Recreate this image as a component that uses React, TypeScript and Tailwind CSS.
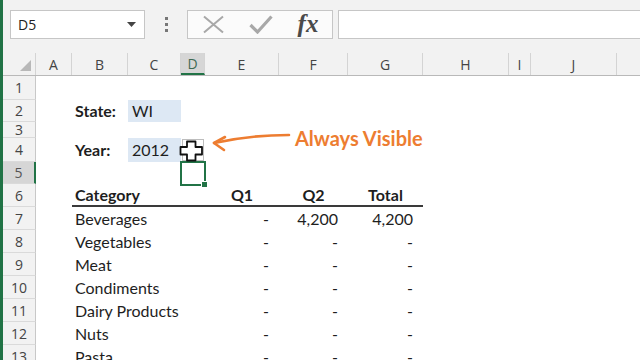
import React from 'react';

type Col = { l: string; w: string };
const cols: Col[] = [
  { l: 'A', w: 'w-[36px]' },
  { l: 'B', w: 'w-[56px]' },
  { l: 'C', w: 'w-[53px]' },
  { l: 'D', w: 'w-[24px]' },
  { l: 'E', w: 'w-[74px]' },
  { l: 'F', w: 'w-[69px]' },
  { l: 'G', w: 'w-[75px]' },
  { l: 'H', w: 'w-[86px]' },
  { l: 'I', w: 'w-[22px]' },
  { l: 'J', w: 'w-[86px]' },
  { l: 'K', w: 'w-[96px]' },
];

const rows = [
  { n: 1, h: 'h-[24px]' },
  { n: 2, h: 'h-[22px]' },
  { n: 3, h: 'h-[16px]' },
  { n: 4, h: 'h-[24px]' },
  { n: 5, h: 'h-[22px]' },
  { n: 6, h: 'h-[23px]' },
  { n: 7, h: 'h-[23px]' },
  { n: 8, h: 'h-[23px]' },
  { n: 9, h: 'h-[23px]' },
  { n: 10, h: 'h-[23px]' },
  { n: 11, h: 'h-[23px]' },
  { n: 12, h: 'h-[23px]' },
  { n: 13, h: 'h-[23px]' },
];

const cats = ['Beverages', 'Vegetables', 'Meat', 'Condiments', 'Dairy Products', 'Nuts', 'Pasta'];

function cell(r: number, c: string): { node?: React.ReactNode; cls?: string } {
  if (r === 2) {
    if (c === 'B') return { node: <span className="font-bold pl-[3px]">State:</span> };
    if (c === 'C') return { node: <span className="pl-[4px]">WI</span>, cls: 'bg-[#dde8f4]' };
  }
  if (r === 4) {
    if (c === 'B') return { node: <span className="font-bold pl-[3px]">Year:</span> };
    if (c === 'C') return { node: <span className="pl-[4px]">2012</span>, cls: 'bg-[#dde8f4]' };
  }
  if (r === 6) {
    const u = 'border-b-2 border-[#3a3a3a]';
    if (c === 'B') return { node: <span className="font-bold pl-[3px]">Category</span>, cls: u };
    if (c === 'C' || c === 'D') return { cls: u };
    if (c === 'E') return { node: <span className="font-bold w-full text-center">Q1</span>, cls: u };
    if (c === 'F') return { node: <span className="font-bold w-full text-center">Q2</span>, cls: u };
    if (c === 'G') return { node: <span className="font-bold w-full text-center">Total</span>, cls: u };
  }
  if (r >= 7 && r <= 13) {
    const name = cats[r - 7];
    if (c === 'B') return { node: <span className="pl-[3px] whitespace-nowrap">{name}</span>, cls: 'overflow-visible' };
    if (c === 'E') return { node: <span className="w-full text-right pr-[10px]">-</span> };
    if (c === 'F') return { node: <span className="w-full text-right pr-[10px]">{r === 7 ? '4,200' : '-'}</span> };
    if (c === 'G') return { node: <span className="w-full text-right pr-[10px]">{r === 7 ? '4,200' : '-'}</span> };
  }
  return {};
}

export default function App() {
  return (
    <div className="relative w-[640px] h-[360px] overflow-hidden flex bg-white">
      <div className="w-[3px] h-full bg-[#217346] shrink-0" />
      <div className="flex flex-col flex-1 min-w-0">
        {/* Toolbar */}
        <div className="h-[53px] bg-[#f2f2f2] flex items-start pt-[10px] pl-[7px] shrink-0" style={{ fontFamily: '"Open Sans", "Noto Sans", sans-serif' }}>
          <div className="w-[135px] h-[29px] bg-white border border-[#c6c6c6] flex items-center justify-between pl-[7px] pr-[8px] shrink-0">
            <span className="text-[14px] text-[#222]">D5</span>
            <svg width="9" height="5" viewBox="0 0 9 5"><polygon points="0,0 9,0 4.5,5" fill="#444" /></svg>
          </div>
          <div className="w-[42px] h-[29px] flex flex-col items-center justify-center gap-[3px] shrink-0">
            <div className="w-[3px] h-[3px] bg-[#777]" />
            <div className="w-[3px] h-[3px] bg-[#777]" />
            <div className="w-[3px] h-[3px] bg-[#777]" />
          </div>
          <div className="w-[146px] h-[29px] bg-[#fbfbfb] border border-[#c6c6c6] flex items-center shrink-0">
            <div className="w-[50px] flex justify-center">
              <svg width="23" height="19" viewBox="0 0 23 19"><path d="M2 1.5 L21 17.5 M21 1.5 L2 17.5" stroke="#a8a8a8" strokeWidth="2" fill="none" /></svg>
            </div>
            <div className="w-[46px] flex justify-center">
              <svg width="24" height="19" viewBox="0 0 24 19"><path d="M1.5 10 L8.5 17 L22.5 1.5" stroke="#a8a8a8" strokeWidth="3.2" fill="none" /></svg>
            </div>
            <div className="flex-1 flex justify-center">
              <span className="text-[25px] italic font-bold leading-none text-[#4a4a4a] -mt-[2px]" style={{ fontFamily: '"Liberation Serif", "DejaVu Serif", serif' }}>fx</span>
            </div>
          </div>
          <div className="ml-[5px] flex-1 h-[29px] bg-white border border-[#c6c6c6] border-r-0" />
        </div>
        {/* Column header */}
        <div className="h-[23px] flex bg-[#f2f2f2] border-b border-[#b9b9b9] shrink-0" style={{ fontFamily: '"Open Sans", "Noto Sans", sans-serif' }}>
          <div className="w-[33px] shrink-0 relative border-r border-[#d4d4d4]">
            <svg className="absolute right-[4px] bottom-[4px]" width="11" height="11" viewBox="0 0 11 11"><polygon points="11,0 11,11 0,11" fill="#b8b8b8" /></svg>
          </div>
          {cols.map((c) => (
            <div
              key={c.l}
              className={`${c.w} shrink-0 flex items-center justify-center text-[14px] border-r border-[#d4d4d4] ${c.l === 'D' ? 'bg-[#d6d6d6] text-[#3f6a52] border-b-2 border-b-[#217346]' : 'text-[#444]'}`}
            >
              {c.l === 'K' ? '' : c.l}
            </div>
          ))}
        </div>
        {/* Rows */}
        <div className="flex flex-col text-[16px] text-[#1e1e1e]" style={{ fontFamily: 'Lato, "Open Sans", sans-serif' }}>
          {rows.map((r) => (
            <div key={r.n} className={`${r.h} flex shrink-0`}>
              <div
                className={`w-[33px] shrink-0 flex items-center justify-center text-[14px] border-b border-[#dadada] ${r.n === 5 ? 'bg-[#d6d6d6] text-[#555] border-r-2 border-r-[#217346]' : 'bg-[#f2f2f2] text-[#444] border-r border-r-[#c8c8c8]'}`}
                style={{ fontFamily: '"Open Sans", "Noto Sans", sans-serif' }}
              >
                {r.n}
              </div>
              {cols.map((c) => {
                const v = cell(r.n, c.l);
                return (
                  <div key={c.l} className={`${c.w} shrink-0 flex items-center ${v.cls ?? ''}`}>
                    {v.node}
                  </div>
                );
              })}
            </div>
          ))}
        </div>
      </div>

      {/* Dropdown button at D4 */}
      <div className="absolute left-[182px] top-[139px] w-[22px] h-[22px] bg-white border border-[#bdbdbd]" />
      {/* Selection D5 */}
      <div className="absolute left-[180px] top-[161px] w-[26px] h-[25px] border-2 border-[#217346]" />
      <div className="absolute left-[201px] top-[181px] w-[7px] h-[7px] bg-[#217346] border border-white" />
      {/* Cursor */}
      <svg className="absolute left-[179px] top-[140px]" width="25" height="22" viewBox="0 0 25 22">
        <polygon points="8,1.5 16.5,1.5 16.5,7 23,7 23,14.5 16.5,14.5 16.5,20.5 8,20.5 8,14.5 1.5,14.5 1.5,7 8,7" fill="white" stroke="#111" strokeWidth="1.8" strokeLinejoin="round" />
      </svg>
      {/* Arrow */}
      <svg className="absolute left-[205px] top-[125px]" width="95" height="32" viewBox="0 0 95 32">
        <path d="M84 10 Q 45 10 9 18" stroke="#ed7d31" strokeWidth="2.6" fill="none" strokeLinecap="round" />
        <path d="M20 12 L9 18 L19 25" stroke="#ed7d31" strokeWidth="2.6" fill="none" strokeLinecap="round" strokeLinejoin="round" />
      </svg>
      <div className="absolute left-[295px] top-[125px] h-[26px] flex items-center text-[20px] font-bold text-[#ed7d31] whitespace-nowrap" style={{ fontFamily: 'Lato, "Open Sans", sans-serif' }}>
        Always Visible
      </div>
    </div>
  );
}
